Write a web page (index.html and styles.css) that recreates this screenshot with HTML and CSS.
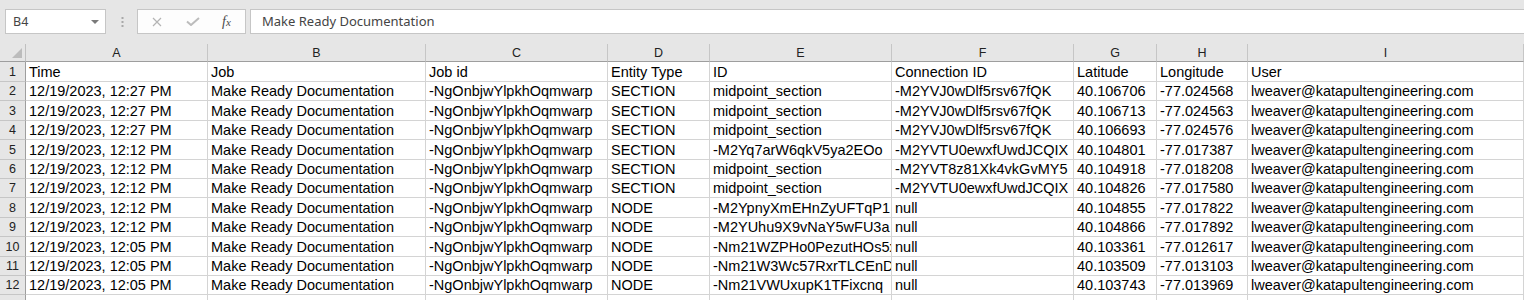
FILE: index.html
```html
<!DOCTYPE html>
<html lang="en">
<head>
    <meta charset="UTF-8">
    <title>Book1 - Excel</title>
    <link rel="stylesheet" href="styles.css">
</head>
<body>
    <div class="toolbar">
        <div class="namebox">
            <span>B4</span>
            <span class="caret"></span>
        </div>
        <svg class="grip" width="3" height="10" viewBox="0 0 3 10">
            <rect x="0.5" y="0" width="2" height="2" fill="#a8a8a8"/>
            <rect x="0.5" y="4" width="2" height="2" fill="#a8a8a8"/>
            <rect x="0.5" y="8" width="2" height="2" fill="#a8a8a8"/>
        </svg>
        <div class="fxbox">
            <svg class="icon-cancel" width="10" height="10" viewBox="0 0 10 10">
                <path d="M1 1 L9 9 M9 1 L1 9" stroke="#b4b4b4" stroke-width="1.2" fill="none"/>
            </svg>
            <svg class="icon-enter" width="14" height="9" viewBox="0 0 14 9">
                <path d="M1 4.5 L5 8 L13 1" stroke="#bcbcbc" stroke-width="2" fill="none"/>
            </svg>
            <span class="icon-fx">f<span>x</span></span>
        </div>
        <div class="formula">Make Ready Documentation</div>
    </div>

    <div id="sheet" class="sheet"></div>

    <script>
        const cols = ['A', 'B', 'C', 'D', 'E', 'F', 'G', 'H', 'I'];
        const job = 'Make Ready Documentation';
        const jobId = '-NgOnbjwYlpkhOqmwarp';
        const user = 'lweaver@katapultengineering.com';

        const rows = [
            ['Time', 'Job', 'Job id', 'Entity Type', 'ID', 'Connection ID', 'Latitude', 'Longitude', 'User'],
            ['12/19/2023, 12:27 PM', job, jobId, 'SECTION', 'midpoint_section', '-M2YVJ0wDlf5rsv67fQK', '40.106706', '-77.024568', user],
            ['12/19/2023, 12:27 PM', job, jobId, 'SECTION', 'midpoint_section', '-M2YVJ0wDlf5rsv67fQK', '40.106713', '-77.024563', user],
            ['12/19/2023, 12:27 PM', job, jobId, 'SECTION', 'midpoint_section', '-M2YVJ0wDlf5rsv67fQK', '40.106693', '-77.024576', user],
            ['12/19/2023, 12:12 PM', job, jobId, 'SECTION', '-M2Yq7arW6qkV5ya2EOo', '-M2YVTU0ewxfUwdJCQIX', '40.104801', '-77.017387', user],
            ['12/19/2023, 12:12 PM', job, jobId, 'SECTION', 'midpoint_section', '-M2YVT8z81Xk4vkGvMY5', '40.104918', '-77.018208', user],
            ['12/19/2023, 12:12 PM', job, jobId, 'SECTION', 'midpoint_section', '-M2YVTU0ewxfUwdJCQIX', '40.104826', '-77.017580', user],
            ['12/19/2023, 12:12 PM', job, jobId, 'NODE', '-M2YpnyXmEHnZyUFTqP1', 'null', '40.104855', '-77.017822', user],
            ['12/19/2023, 12:12 PM', job, jobId, 'NODE', '-M2YUhu9X9vNaY5wFU3a', 'null', '40.104866', '-77.017892', user],
            ['12/19/2023, 12:05 PM', job, jobId, 'NODE', '-Nm21WZPHo0PezutHOs5x', 'null', '40.103361', '-77.012617', user],
            ['12/19/2023, 12:05 PM', job, jobId, 'NODE', '-Nm21W3Wc57RxrTLCEnDq', 'null', '40.103509', '-77.013103', user],
            ['12/19/2023, 12:05 PM', job, jobId, 'NODE', '-Nm21VWUxupK1TFixcnq', 'null', '40.103743', '-77.013969', user],
            ['', '', '', '', '', '', '', '', '']
        ];

        const sheet = document.getElementById('sheet');

        function addCell(cls, text) {
            const div = document.createElement('div');
            div.className = cls;
            div.textContent = text;
            sheet.appendChild(div);
        }

        // column letters
        addCell('corner', '');
        cols.forEach(c => addCell('col-head', c));

        rows.forEach((row, i) => {
            addCell('row-head', i + 1);
            row.forEach(v => addCell('cell', v));
        });
    </script>
</body>
</html>
```

FILE: styles.css
```css
body {
    margin: 0;
    background-color: #e6e6e6;
    font-family: "Liberation Sans", Arial, sans-serif;
    overflow: hidden;
}

.toolbar {
    display: flex;
    align-items: center;
    height: 44px;
    padding: 9px 0 10px 5px;
    box-sizing: border-box;
    font-family: "Noto Sans", "Open Sans", sans-serif;
    font-size: 12.5px;
    color: #444;
}

.namebox {
    display: flex;
    align-items: center;
    width: 101px;
    height: 25px;
    box-sizing: border-box;
    padding: 0 6px 0 7px;
    background-color: #fff;
    border: 1px solid #c6c6c6;
}

.caret {
    margin-left: auto;
    width: 0;
    height: 0;
    border-left: 4px solid transparent;
    border-right: 4px solid transparent;
    border-top: 4px solid #7a7a7a;
}

.grip {
    margin: 0 13px 0 15px;
}

.fxbox {
    display: flex;
    align-items: center;
    width: 109px;
    height: 25px;
    box-sizing: border-box;
    padding-left: 14px;
    background-color: #fdfdfd;
    border: 1px solid #c6c6c6;
}

.icon-enter {
    margin-left: 24px;
}

.icon-fx {
    margin-left: 22px;
    font-family: "Liberation Serif", serif;
    font-style: italic;
    font-size: 14px;
    color: #4a4a4a;
}

.icon-fx span {
    font-size: 11px;
}

.formula {
    flex: 1;
    height: 25px;
    box-sizing: border-box;
    margin-left: 4px;
    padding-left: 11px;
    font-size: 13px;
    line-height: 23px;
    background-color: #fff;
    border: 1px solid #c6c6c6;
    border-right: none;
}

.sheet {
    display: grid;
    grid-template-columns: 26px 182px 218px 182px 102px 182px 182px 83px 91px 1fr;
    grid-template-rows: 18px 20px repeat(12, 19.4px);
    font-size: 14.5px;
    color: #000;
}

.corner,
.col-head,
.row-head {
    background-color: #e6e6e6;
    color: #222;
    font-size: 12.5px;
    box-sizing: border-box;
}

.corner {
    position: relative;
    border-right: 1px solid #c0c0c0;
    border-bottom: 1px solid #9e9e9e;
}

.corner::after {
    content: "";
    position: absolute;
    right: 3px;
    bottom: 3px;
    width: 0;
    height: 0;
    border-left: 10px solid transparent;
    border-bottom: 10px solid #bcbcbc;
}

.col-head {
    display: flex;
    align-items: center;
    justify-content: center;
    border-right: 1px solid #c6c6c6;
    border-bottom: 1px solid #9e9e9e;
}

.row-head {
    display: flex;
    align-items: flex-end;
    justify-content: center;
    padding-bottom: 2px;
    line-height: 14px;
    border-right: 1px solid #9e9e9e;
    border-bottom: 1px solid #c6c6c6;
}

.cell {
    display: flex;
    align-items: flex-end;
    padding: 0 0 1px 3px;
    line-height: 16px;
    white-space: nowrap;
    overflow: hidden;
    box-sizing: border-box;
    background-color: #fff;
    border-right: 1px solid #d4d4d4;
    border-bottom: 1px solid #d4d4d4;
}
```
